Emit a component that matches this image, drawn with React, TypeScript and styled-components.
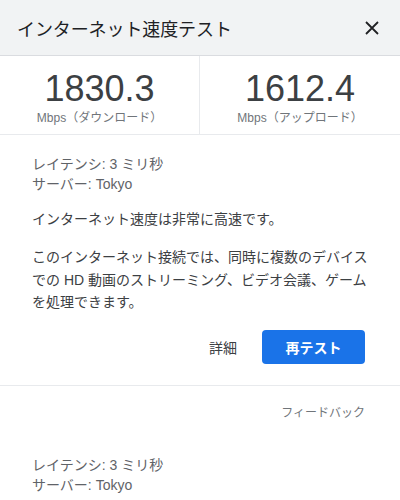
import React from "react";
import styled, { createGlobalStyle } from "styled-components";

const Global = createGlobalStyle`
  html, body {
    margin: 0;
    padding: 0;
    background: #ffffff;
  }
  body {
    font-family: "Liberation Sans", Arial, "Noto Sans CJK JP", sans-serif;
    color: #3c4043;
  }
`;

const Page = styled.div`
  width: 400px;
  height: 500px;
  overflow: hidden;
  background: #fff;
`;

const Header = styled.div`
  height: 56px;
  background: #f1f3f4;
  border-bottom: 1px solid #dadce0;
  display: flex;
  align-items: center;
  justify-content: space-between;
  padding: 0 18px 0 17px;
  box-sizing: border-box;
`;

const Title = styled.div`
  font-size: 18px;
  color: #202124;
  letter-spacing: -0.1px;
`;

const CloseButton = styled.button`
  border: none;
  background: transparent;
  padding: 0;
  width: 20px;
  height: 20px;
  display: flex;
  align-items: center;
  justify-content: center;
  cursor: pointer;
`;

const Stats = styled.div`
  display: grid;
  grid-template-columns: 1fr 1fr;
  height: 79px;
  border-bottom: 1px solid #e8eaed;
  box-sizing: border-box;
`;

const Stat = styled.div<{ $divider?: boolean }>`
  display: flex;
  flex-direction: column;
  align-items: center;
  padding-top: 15px;
  border-right: ${(p) => (p.$divider ? "1px solid #e8eaed" : "none")};
`;

const Value = styled.div`
  font-size: 36px;
  line-height: 36px;
  color: #3c4043;
`;

const Unit = styled.div`
  font-size: 12px;
  line-height: 16px;
  color: #70757a;
  margin-top: 3px;
`;

const Body = styled.div`
  padding: 19px 32px 0 32px;
`;

const Meta = styled.div`
  font-size: 14px;
  line-height: 20px;
  color: #5f6368;
`;

const Summary = styled.p`
  margin: 15px 0 0;
  font-size: 14px;
  line-height: 20px;
  color: #3c4043;
`;

const Detail = styled.p`
  margin: 17px 0 0;
  font-size: 14px;
  line-height: 22.5px;
  color: #3c4043;
`;

const Actions = styled.div`
  display: flex;
  justify-content: flex-end;
  align-items: center;
  gap: 25px;
  margin-top: 16px;
  padding-right: 3px;
  padding-bottom: 21px;
`;

const TextButton = styled.button`
  border: none;
  background: transparent;
  padding: 0;
  font-family: inherit;
  font-size: 14px;
  color: #3c4043;
`;

const PrimaryButton = styled.button`
  border: none;
  border-radius: 4px;
  background: #1a73e8;
  color: #fff;
  font-family: inherit;
  font-size: 14px;
  font-weight: bold;
  width: 103px;
  height: 34px;
`;

const Divider = styled.div`
  height: 1px;
  background: #e8eaed;
`;

const Feedback = styled.div`
  display: flex;
  justify-content: flex-end;
  padding: 19px 35px 0 0;
  font-size: 12px;
  line-height: 16px;
  color: #70757a;
`;

const Lower = styled.div`
  padding: 34px 32px 0;
`;

const CloseIcon = () => (
  <svg width="16" height="16" viewBox="0 0 16 16">
    <path d="M2 2L14 14M14 2L2 14" stroke="#202124" strokeWidth="1.8" strokeLinecap="butt" />
  </svg>
);

export default function App() {
  return (
    <Page>
      <Global />
      <Header>
        <Title>インターネット速度テスト</Title>
        <CloseButton aria-label="閉じる">
          <CloseIcon />
        </CloseButton>
      </Header>
      <Stats>
        <Stat $divider>
          <Value>1830.3</Value>
          <Unit>Mbps（ダウンロード）</Unit>
        </Stat>
        <Stat>
          <Value>1612.4</Value>
          <Unit>Mbps（アップロード）</Unit>
        </Stat>
      </Stats>
      <Body>
        <Meta>
          レイテンシ: 3 ミリ秒
          <br />
          サーバー: Tokyo
        </Meta>
        <Summary>インターネット速度は非常に高速です。</Summary>
        <Detail>
          このインターネット接続では、同時に複数のデバイスでの HD 動画のストリーミング、ビデオ会議、ゲームを処理できます。
        </Detail>
        <Actions>
          <TextButton>詳細</TextButton>
          <PrimaryButton>再テスト</PrimaryButton>
        </Actions>
      </Body>
      <Divider />
      <Feedback>フィードバック</Feedback>
      <Lower>
        <Meta>
          レイテンシ: 3 ミリ秒
          <br />
          サーバー: Tokyo
        </Meta>
      </Lower>
    </Page>
  );
}
